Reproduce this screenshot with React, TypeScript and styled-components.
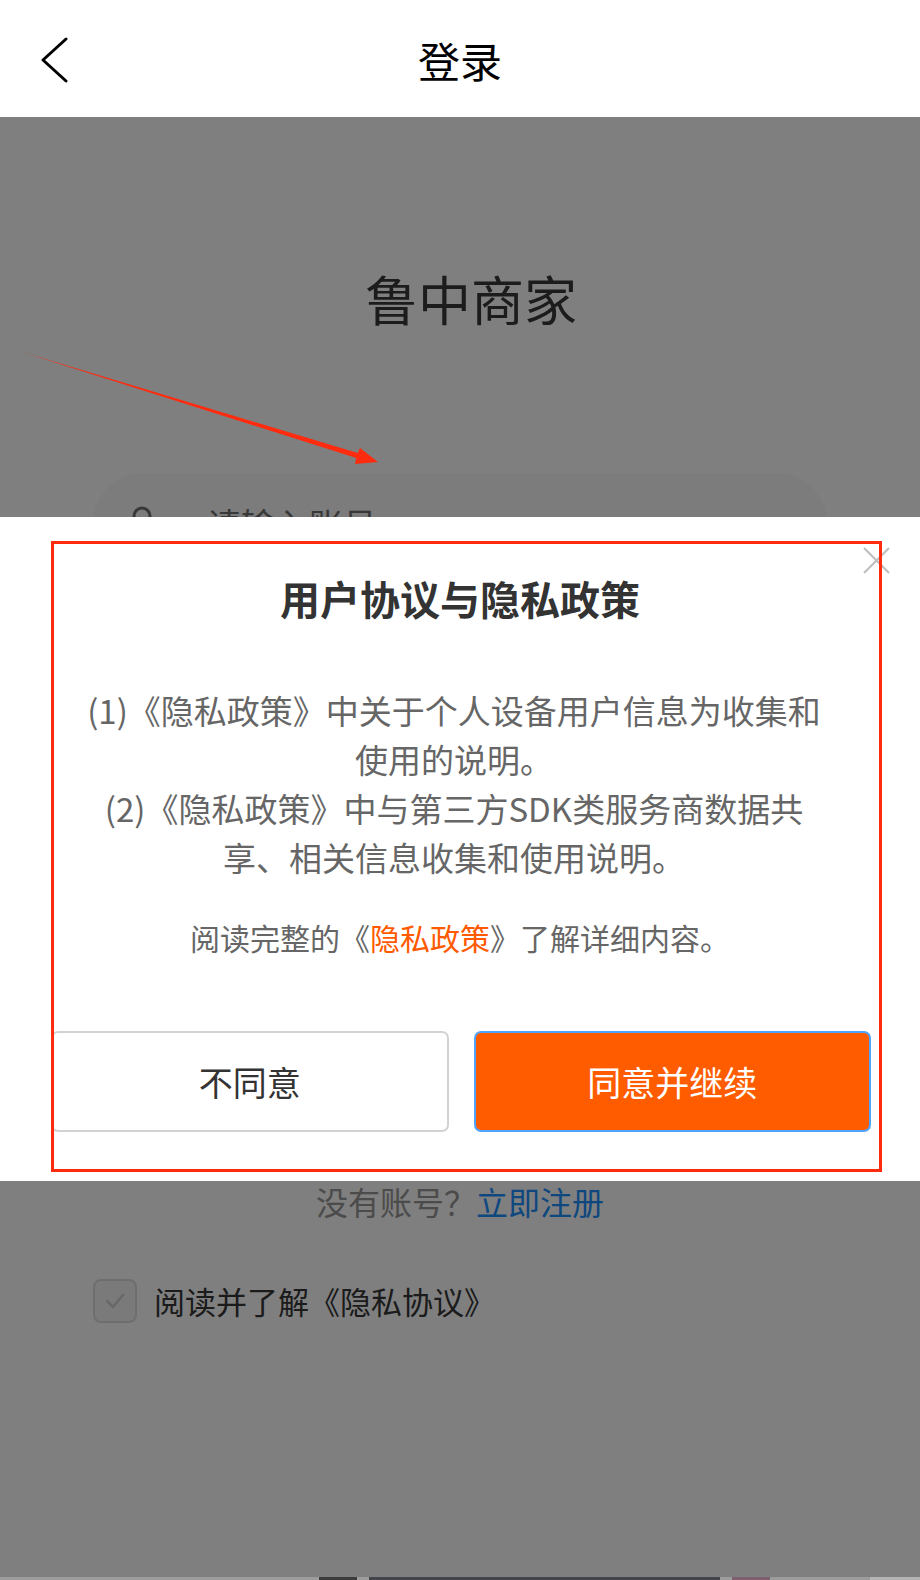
import React, { FC } from 'react';
import styled, { createGlobalStyle } from 'styled-components';

const ORANGE = '#ff5c00';
const ANNOTATION_RED = '#ff2b0f';
const TEXT_DARK = '#333333';
const TEXT_MID = '#666666';

const GlobalStyle = createGlobalStyle`
  html, body {
    margin: 0;
    padding: 0;
    background: #ffffff;
  }
  * {
    box-sizing: border-box;
    font-family: 'Noto Sans CJK SC', 'Noto Sans', sans-serif;
  }
`;

const Screen = styled.div`
  position: relative;
  width: 920px;
  height: 1580px;
  overflow: hidden;
  display: flex;
  flex-direction: column;
  background: #ffffff;
`;

/* ---------- header ---------- */

const Header = styled.header`
  height: 117px;
  flex-shrink: 0;
  display: grid;
  grid-template-columns: 1fr auto 1fr;
  align-items: center;
  background: #ffffff;
  padding-top: 2px;
`;

const BackButton = styled.button`
  justify-self: start;
  margin-left: 38px;
  width: 34px;
  height: 48px;
  padding: 0;
  border: none;
  background: none;
  display: flex;
  align-items: center;
  justify-content: center;
`;

const HeaderTitle = styled.h1`
  margin: 0;
  font-size: 42px;
  font-weight: 400;
  line-height: 1;
  color: #000000;
`;

/* ---------- login page (under the mask) ---------- */

const Body = styled.main`
  position: relative;
  flex: 1;
  display: flex;
  flex-direction: column;
  align-items: center;
  background: #ffffff;
`;

const Brand = styled.div`
  margin-top: 150px;
  padding-left: 22px;
  font-size: 53px;
  line-height: 62px;
  color: #383838;
`;

const Field = styled.div<{ $gap: number }>`
  margin-top: ${(p) => p.$gap}px;
  width: 734px;
  height: 100px;
  border-radius: 50px;
  background: #f6f8f6;
  display: flex;
  align-items: center;
  gap: 48px;
  padding-left: 32px;
  font-size: 34px;
  color: #707070;
`;

const LoginButton = styled.div`
  margin-top: 80px;
  width: 734px;
  height: 100px;
  border-radius: 50px;
  background: ${ORANGE};
  color: #ffffff;
  font-size: 36px;
  display: flex;
  align-items: center;
  justify-content: center;
`;

const RegisterRow = styled.div`
  margin-top: 284px;
  font-size: 32px;
  line-height: 48px;
  color: #969696;
`;

const RegisterLink = styled.span`
  color: #1e8fff;
`;

const AgreementRow = styled.label`
  align-self: flex-start;
  margin: 53px 0 0 93px;
  display: flex;
  align-items: center;
  gap: 17px;
  font-size: 31px;
  color: #363636;
`;

const CheckBox = styled.span`
  width: 44px;
  height: 44px;
  border: 2px solid #dcdcdc;
  border-radius: 8px;
  background: #f4f4f4;
  display: flex;
  align-items: center;
  justify-content: center;
`;

const Mask = styled.div`
  position: absolute;
  inset: 0;
  background: rgba(0, 0, 0, 0.5);
`;

const NavStrip = styled.div`
  height: 3px;
  flex-shrink: 0;
  display: flex;
`;

const StripPart = styled.span<{ $w: number; $c: string }>`
  width: ${(p) => p.$w}px;
  background: ${(p) => p.$c};
`;

/* ---------- privacy dialog ---------- */

const Dialog = styled.section`
  position: absolute;
  top: 517px;
  left: 0;
  right: 0;
  height: 664px;
  background: #ffffff;
  display: flex;
  flex-direction: column;
`;

const CloseButton = styled.button`
  position: absolute;
  top: 30px;
  right: 30px;
  width: 27px;
  height: 27px;
  padding: 0;
  border: none;
  background: none;
`;

const DialogTitle = styled.h2`
  margin: 57px 0 0;
  text-align: center;
  font-size: 40px;
  line-height: 48px;
  font-weight: 700;
  color: ${TEXT_DARK};
`;

const Clauses = styled.div`
  margin: 64px 0 0 78px;
  width: 752px;
  text-align: center;
  font-size: 33px;
  line-height: 49px;
  color: ${TEXT_MID};
`;

const Clause = styled.p`
  margin: 0;
`;

const ReadMore = styled.p`
  margin: 31px 0 0;
  text-align: center;
  font-size: 30px;
  line-height: 48px;
  color: ${TEXT_MID};
`;

const PolicyLink = styled.span`
  color: #ff5a00;
`;

const ButtonRow = styled.div`
  margin-top: 70px;
  padding: 0 49px 0 51px;
  display: flex;
  gap: 25px;
`;

const DialogButton = styled.button<{ $primary?: boolean }>`
  flex: 1;
  height: 101px;
  border-radius: 7px;
  border: 2px solid ${(p) => (p.$primary ? '#4ea4ff' : '#d2d2d2')};
  background: ${(p) => (p.$primary ? ORANGE : '#ffffff')};
  color: ${(p) => (p.$primary ? '#ffffff' : TEXT_DARK)};
  font-size: 34px;
  padding: 0;
`;

/* ---------- screenshot annotations ---------- */

const AnnotationBox = styled.div`
  position: absolute;
  top: 541px;
  left: 51px;
  width: 831px;
  height: 631px;
  border: 3px solid ${ANNOTATION_RED};
  pointer-events: none;
`;

const AnnotationArrow = styled.svg`
  position: absolute;
  top: 0;
  left: 0;
  pointer-events: none;
`;

const App: FC = () => {
  return (
    <>
      <GlobalStyle />
      <Screen>
        <Header>
          <BackButton aria-label="返回">
            <svg width="30" height="46" viewBox="0 0 30 46">
              <polyline points="26,2 3,23 26,44" fill="none" stroke="#000" strokeWidth="3" strokeLinecap="round" strokeLinejoin="round" />
            </svg>
          </BackButton>
          <HeaderTitle>登录</HeaderTitle>
          <span />
        </Header>

        <Body>
          <Brand>鲁中商家</Brand>
          <Field $gap={144}>
            <svg width="34" height="34" viewBox="0 0 34 34">
              <circle cx="17" cy="10" r="8" fill="none" stroke="#707070" strokeWidth="3" />
              <path d="M3 33 C3 24 9 20 17 20 C25 20 31 24 31 33" fill="none" stroke="#707070" strokeWidth="3" />
            </svg>
            请输入账号
          </Field>
          <Field $gap={40}>请输入密码</Field>
          <LoginButton>登录</LoginButton>
          <RegisterRow>
            没有账号？<RegisterLink>立即注册</RegisterLink>
          </RegisterRow>
          <AgreementRow>
            <CheckBox>
              <svg width="24" height="24" viewBox="0 0 24 24">
                <polyline points="4,12 10,18 20,6" fill="none" stroke="#d0d0d0" strokeWidth="2.5" strokeLinecap="round" strokeLinejoin="round" />
              </svg>
            </CheckBox>
            阅读并了解《隐私协议》
          </AgreementRow>
          <Mask />
        </Body>

        <NavStrip>
          <StripPart $w={319} $c="#9c9c9c" />
          <StripPart $w={38} $c="#3c3c3c" />
          <StripPart $w={12} $c="#9c9c9c" />
          <StripPart $w={351} $c="#43434b" />
          <StripPart $w={12} $c="#9c9c9c" />
          <StripPart $w={38} $c="#7d5f6e" />
          <StripPart $w={100} $c="#9c9c9c" />
          <StripPart $w={50} $c="#b4b4b4" />
        </NavStrip>

        <Dialog>
          <CloseButton aria-label="关闭">
            <svg width="27" height="27" viewBox="0 0 27 27">
              <path d="M1 1 L26 26 M26 1 L1 26" stroke="#bdbdbd" strokeWidth="2" />
            </svg>
          </CloseButton>
          <DialogTitle>用户协议与隐私政策</DialogTitle>
          <Clauses>
            <Clause>(1)《隐私政策》中关于个人设备用户信息为收集和使用的说明。</Clause>
            <Clause>(2)《隐私政策》中与第三方SDK类服务商数据共享、相关信息收集和使用说明。</Clause>
          </Clauses>
          <ReadMore>
            阅读完整的《<PolicyLink>隐私政策</PolicyLink>》了解详细内容。
          </ReadMore>
          <ButtonRow>
            <DialogButton>不同意</DialogButton>
            <DialogButton $primary>同意并继续</DialogButton>
          </ButtonRow>
        </Dialog>

        <AnnotationBox />
        <AnnotationArrow width="920" height="600" viewBox="0 0 920 600">
          <polygon
            points="22,352 357.7,453.1 360,448 378,462 355,464 356.3,457.9"
            fill={ANNOTATION_RED}
          />
        </AnnotationArrow>
      </Screen>
    </>
  );
};

export default App;
